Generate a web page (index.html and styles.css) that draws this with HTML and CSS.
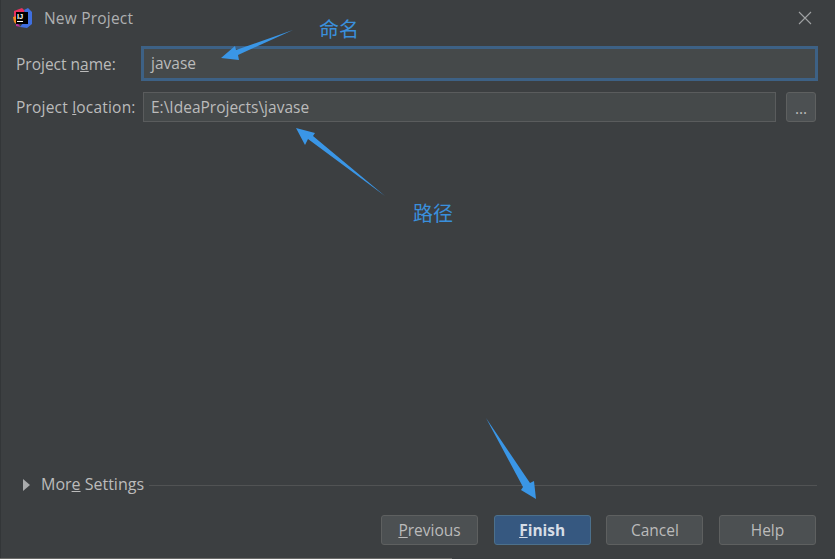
FILE: index.html
```html
<!DOCTYPE html>
<html lang="en">
<head>
<meta charset="utf-8">
<title>New Project</title>
<link rel="stylesheet" href="styles.css">
</head>
<body>
<div class="dialog">
  <header class="titlebar">
    <svg class="logo" width="20" height="20" viewBox="0 0 20 20">
      <path d="M1 3 L9 0 L12 3 L4 12 L1 11Z" fill="#e8305f"/>
      <path d="M0 9 L4 8 L4 17 L1 14Z" fill="#f58a1f"/>
      <path d="M3 14 L8 19 L3 18Z" fill="#b5319c"/>
      <path d="M11 2 L15 0 L19 4 L19 16 L14 20 L7 19 L14 10Z" fill="#3f6fe0"/>
      <rect x="3" y="4" width="12" height="12" fill="#000"/>
      <text class="logo-text" x="4" y="11">IJ</text>
      <rect x="4" y="13" width="6" height="1" fill="#fff"/>
    </svg>
    <span class="title">New Project</span>
    <svg class="close" width="14" height="14" viewBox="0 0 14 14"><path d="M1 1 L13 13 M13 1 L1 13" stroke="#a0a2a3" stroke-width="1.1" fill="none"/></svg>
  </header>
  <main class="form">
    <label class="label">Project n<u>a</u>me:</label>
    <div class="input focused">javase</div>
    <label class="label label-wide">Project <u>l</u>ocation:</label>
    <div class="location">
      <div class="input">E:\IdeaProjects\javase</div>
      <button class="browse">...</button>
    </div>
  </main>
  <section class="more">
    <svg class="caret" width="8" height="12" viewBox="0 0 8 12"><path d="M0 0 L7 6 L0 12Z" fill="#a9abac"/></svg>
    <span class="more-label">Mor<u>e</u> Settings</span>
    <span class="rule"></span>
  </section>
  <footer class="buttons">
    <button class="btn"><u>P</u>revious</button>
    <button class="btn primary"><u>F</u>inish</button>
    <button class="btn">Cancel</button>
    <button class="btn">Help</button>
  </footer>
  <div class="edge"></div>
</div>
<svg class="arrows" width="835" height="559" viewBox="0 0 835 559">
  <path d="M293 30 L238 55 L239 60 L221 58 L235 46 L236 50Z" fill="#3a96e6"/>
  <path d="M385 196 L313 136 L315 133 L296 128 L305 145 L308 139Z" fill="#3a96e6"/>
  <path d="M486 418 L530 483 L534 481 L536 499 L521 490 L523 487Z" fill="#3a96e6"/>
</svg>
<span class="note note-name">命名</span>
<span class="note note-path">路径</span>
</body>
</html>
```
FILE: styles.css
```css
* { box-sizing: border-box; }
html, body { margin: 0; height: 100%; overflow: hidden; }
body { background: #3c3f41; color: #bbbbbb; font-family: "Open Sans", "Noto Sans", sans-serif; font-size: 15.5px; }
.dialog { height: 559px; display: flex; flex-direction: column; border-left: 1px solid #333638; }
.titlebar { height: 46px; display: flex; align-items: flex-start; padding: 8px 23px 0 12px; flex: none; }
.logo { flex: none; }
.title { margin-left: 11px; line-height: 20px; color: #aeb0b1; letter-spacing: 0.2px; }
.close { margin-left: auto; margin-top: 3px; }
.form { flex: 1; display: grid; grid-template-columns: 127px 1fr; grid-template-rows: 35px 30px; row-gap: 11px; padding: 0 18px 0 15px; align-items: center; align-content: start; }
.label { white-space: nowrap; line-height: 20px; }
.label-wide { letter-spacing: 0.2px; }
.input { height: 30px; background: #45494a; border: 1px solid #5a5c5d; padding-left: 7px; line-height: 29px; color: #bbbbbb; flex: 1; }
.input.focused { height: 35px; margin: 0 -1px 0 -2px; border: 3px solid #3d6185; line-height: 28px; }
.location { display: flex; gap: 10px; padding-right: 1px; }
.browse { width: 30px; height: 30px; padding: 0; background: #4c5052; border: 1px solid #5e6060; border-radius: 3px; color: #bbbbbb; font: inherit; line-height: 30px; }
.more { display: flex; align-items: center; padding: 0 18px 0 22px; height: 20px; flex: none; }
.caret { flex: none; }
.more-label { margin-left: 10px; white-space: nowrap; font-size: 16px; line-height: 20px; padding-bottom: 2px; }
.rule { flex: 1; height: 1px; background: #515354; margin-left: 5px; }
.buttons { display: flex; justify-content: flex-end; gap: 15.67px; padding: 20px 19px 13px 0; flex: none; }
.btn { width: 97px; height: 30px; padding: 0; background: #4c5052; border: 1px solid #5e6060; border-radius: 3px; color: #bbbbbb; font: inherit; }
.btn.primary { background: #365880; border-color: #4c708c; color: #d6dde6; font-weight: 700; }
.edge { height: 1px; width: 452px; background: #6a6a68; flex: none; margin-left: -1px; }
.logo-text { font-family: "Liberation Sans", sans-serif; font-size: 7.5px; font-weight: 700; fill: #fff; }
.arrows { position: absolute; left: 0; top: 0; pointer-events: none; }
.note { position: absolute; font-family: "Noto Sans CJK SC", sans-serif; font-size: 20px; line-height: 24px; color: #3a8fdc; }
.note-name { left: 319px; top: 17px; }
.note-path { left: 413px; top: 201px; }
```
